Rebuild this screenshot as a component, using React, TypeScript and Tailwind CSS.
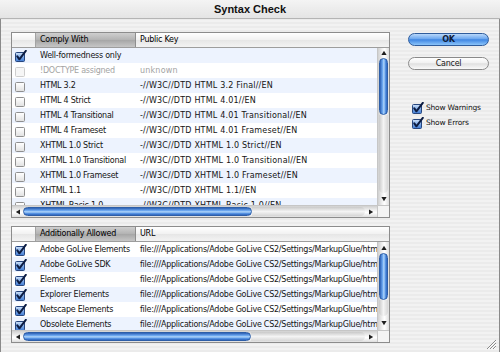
import React from "react";

type Row = { name: string; value: string; checked?: boolean; disabled?: boolean };

const complyRows: Row[] = [
  { name: "Well-formedness only", value: "", checked: true },
  { name: "!DOCTYPE assigned", value: "unknown", disabled: true },
  { name: "HTML 3.2", value: "-//W3C//DTD HTML 3.2 Final//EN" },
  { name: "HTML 4 Strict", value: "-//W3C//DTD HTML 4.01//EN" },
  { name: "HTML 4 Transitional", value: "-//W3C//DTD HTML 4.01 Transitional//EN" },
  { name: "HTML 4 Frameset", value: "-//W3C//DTD HTML 4.01 Frameset//EN" },
  { name: "XHTML 1.0 Strict", value: "-//W3C//DTD XHTML 1.0 Strict//EN" },
  { name: "XHTML 1.0 Transitional", value: "-//W3C//DTD XHTML 1.0 Transitional//EN" },
  { name: "XHTML 1.0 Frameset", value: "-//W3C//DTD XHTML 1.0 Frameset//EN" },
  { name: "XHTML 1.1", value: "-//W3C//DTD XHTML 1.1//EN" },
  { name: "XHTML Basic 1.0", value: "-//W3C//DTD XHTML Basic 1.0//EN" },
];

const glue = "file:///Applications/Adobe GoLive CS2/Settings/MarkupGlue/html";

const allowedRows: Row[] = [
  { name: "Adobe GoLive Elements", value: glue, checked: true },
  { name: "Adobe GoLive SDK", value: glue, checked: true },
  { name: "Elements", value: glue, checked: true },
  { name: "Explorer Elements", value: glue, checked: true },
  { name: "Netscape Elements", value: glue, checked: true },
  { name: "Obsolete Elements", value: glue, checked: true },
];

function CheckBox({ checked, disabled }: { checked?: boolean; disabled?: boolean }) {
  if (checked) {
    return (
      <svg width="12" height="12" viewBox="0 0 12 12" className="block shrink-0">
        <defs>
          <linearGradient id="cbfill" x1="0" y1="0" x2="0" y2="1">
            <stop offset="0" stopColor="#d2e4fa" />
            <stop offset="0.5" stopColor="#7eabe8" />
            <stop offset="1" stopColor="#3f7ad2" />
          </linearGradient>
        </defs>
        <rect x="0.5" y="2.5" width="9" height="9" rx="1" fill="url(#cbfill)" stroke="#27467e" />
        <path
          d="M2.3 6.4 L4.4 9.3 L10.8 0.9"
          fill="none"
          stroke="#0c1c42"
          strokeWidth="2"
          strokeLinecap="round"
          strokeLinejoin="round"
        />
      </svg>
    );
  }
  return (
    <div
      className={
        disabled
          ? "w-[10px] h-[10px] mt-[2px] rounded-[1.5px] border border-[#cdcdcd] bg-[#f6f6f6]"
          : "w-[10px] h-[10px] mt-[2px] rounded-[1.5px] border border-[#8f8f8f] bg-[linear-gradient(to_bottom,#ffffff,#e2e2e2)]"
      }
    />
  );
}

function Arrow({ dir }: { dir: "up" | "down" | "left" | "right" }) {
  const pts = {
    up: "3,0.8 5.6,5 0.4,5",
    down: "0.4,1 5.6,1 3,5.2",
    left: "5,0.4 5,5.6 0.8,3",
    right: "1,0.4 1,5.6 5.2,3",
  }[dir];
  return (
    <svg width="6" height="6" viewBox="0 0 6 6" className="block">
      <polygon points={pts} fill="#1e1e1e" />
    </svg>
  );
}

function VScroll({ upClass, thumbClass, downClass }: { upClass: string; thumbClass: string; downClass: string }) {
  return (
    <div className="w-[12px] flex flex-col border-l border-[#c6c6c6] bg-[linear-gradient(to_right,#d0d0d0,#f6f6f6_45%,#ffffff_60%,#dedede)]">
      <div className={`${upClass} flex items-center justify-center`}>
        <Arrow dir="up" />
      </div>
      <div
        className={`${thumbClass} mx-[1px] rounded-full border border-[#2d5ea8] bg-[linear-gradient(to_right,#2c5fb3,#6aa5ee_35%,#b0d6fb_55%,#4f8de0_80%,#2f64ba)]`}
      />
      <div className="flex-1 mx-[1px] rounded-b-full bg-[linear-gradient(to_right,#c9c9c9,#f4f4f4_50%,#d6d6d6)]" />
      <div className={`${downClass} flex items-center justify-center`}>
        <Arrow dir="down" />
      </div>
    </div>
  );
}

function HScroll({ thumbClass }: { thumbClass: string }) {
  return (
    <div className="h-[12px] flex border-t border-[#c6c6c6]">
      <div className="flex-1 flex bg-[linear-gradient(to_bottom,#d0d0d0,#f6f6f6_45%,#ffffff_60%,#dedede)]">
        <div className="w-[11px] flex items-center justify-center">
          <Arrow dir="left" />
        </div>
        <div
          className={`${thumbClass} my-[1px] rounded-full border border-[#2d5ea8] bg-[linear-gradient(to_bottom,#2c5fb3,#6aa5ee_35%,#b0d6fb_55%,#4f8de0_80%,#2f64ba)]`}
        />
        <div className="flex-1 my-[1px] rounded-r-full bg-[linear-gradient(to_bottom,#c9c9c9,#f4f4f4_50%,#d6d6d6)]" />
        <div className="w-[12px] flex items-center justify-center">
          <Arrow dir="right" />
        </div>
      </div>
      <div className="w-[12px] border-l border-[#c6c6c6] bg-[#f4f4f4]" />
    </div>
  );
}

function ListPane({
  heightClass,
  nameHeader,
  valueHeader,
  rows,
  firstBlue,
  scroll,
  thumbH,
  valueClass,
}: {
  heightClass: string;
  nameHeader: string;
  valueHeader: string;
  rows: Row[];
  firstBlue: boolean;
  scroll: React.ReactNode;
  thumbH: string;
  valueClass: string;
}) {
  return (
    <div className={`${heightClass} flex flex-col border border-[#8c8c8c] bg-white`}>
      <div className="h-[15px] flex border-b border-[#9d9d9d] bg-[linear-gradient(to_bottom,#ffffff,#f1f1f1_50%,#e6e6e6_51%,#f3f3f3)]">
        <div className="w-[24px] border-r border-[#a3a3a3]" />
        <div className="w-[100px] flex items-center pl-[4px] border-r border-[#8e8e8e] bg-[linear-gradient(to_bottom,#cfcfcf,#b2b2b2_50%,#a6a6a6_51%,#c6c6c6)]">
          {nameHeader}
        </div>
        <div className="flex-1 flex items-center pl-[4px]">{valueHeader}</div>
      </div>
      <div className="flex-1 flex min-h-0">
        <div className="flex-1 overflow-hidden">
          {rows.map((r, i) => (
            <div
              key={r.name}
              className={`h-[15px] flex items-center whitespace-nowrap ${
                (i % 2 === 0) === firstBlue ? "bg-[#edf3fe]" : "bg-white"
              } ${r.disabled ? "text-[#a3a3a3]" : "text-[#141414]"}`}
            >
              <div className="w-[24px] shrink-0 flex items-center pl-[3px] h-full">
                <CheckBox checked={r.checked} disabled={r.disabled} />
              </div>
              <div className="w-[100px] shrink-0 pl-[4px]">{r.name}</div>
              <div className={`pl-[4px] ${valueClass}`}>{r.value}</div>
            </div>
          ))}
        </div>
        {scroll}
      </div>
      <HScroll thumbClass={thumbH} />
    </div>
  );
}

function AquaButton({ label, primary }: { label: string; primary?: boolean }) {
  return (
    <div
      className={
        primary
          ? "h-[13px] rounded-full border border-[#2f5c9c] flex items-center justify-center font-bold text-[#10203a] bg-[linear-gradient(to_bottom,#b9d8fb,#6aa6ee_45%,#3f86e3_52%,#8cc5fa_100%)]"
          : "h-[13px] rounded-full border border-[#8a8a8a] flex items-center justify-center text-[#1a1a1a] bg-[linear-gradient(to_bottom,#ffffff,#f1f1f1_45%,#e0e0e0_52%,#fafafa_100%)]"
      }
    >
      {label}
    </div>
  );
}

export default function App() {
  return (
    <div className="relative w-[500px] h-[352px] overflow-hidden flex flex-col font-['DejaVu_Sans',sans-serif] text-[8px] tracking-[-0.25px] bg-[repeating-linear-gradient(0deg,#ebebeb_0px,#ebebeb_2px,#f2f2f2_2px,#f2f2f2_4px)] shadow-[inset_1px_0_0_#8a8a8a,inset_-1px_0_0_#8a8a8a]">
      <div className="h-[19px] shrink-0 flex items-center justify-center pt-[1px] border-b border-[#b4b4b4] bg-[linear-gradient(to_bottom,#f4f4f4,#e4e4e4)] font-['Liberation_Sans',sans-serif] font-bold text-[11px] tracking-normal text-[#111]">
        Syntax Check
      </div>
      <div className="flex pt-[13px] pl-[11px]">
        <div className="w-[379px] flex flex-col gap-[8px]">
          <ListPane
            heightClass="h-[186px]"
            nameHeader="Comply With"
            valueHeader="Public Key"
            rows={complyRows}
            firstBlue={true}
            thumbH="w-[229px]"
            valueClass="tracking-[0.2px]"
            scroll={<VScroll upClass="h-[10px]" thumbClass="h-[57px]" downClass="h-[12px]" />}
          />
          <ListPane
            heightClass="h-[117px]"
            nameHeader="Additionally Allowed"
            valueHeader="URL"
            rows={allowedRows}
            firstBlue={false}
            thumbH="w-[228px]"
            valueClass=""
            scroll={<VScroll upClass="h-[11px]" thumbClass="h-[47px]" downClass="h-[14px]" />}
          />
        </div>
        <div className="ml-[18px] w-[81px] flex flex-col pt-[1px]">
          <AquaButton label="OK" primary />
          <div className="mt-[11px]">
            <AquaButton label="Cancel" />
          </div>
          <div className="mt-[30px] pl-[4px] flex flex-col text-[7.5px] tracking-[-0.2px] text-[#141414]">
            <div className="h-[15px] flex items-center gap-[2px]">
              <CheckBox checked />
              <span>Show Warnings</span>
            </div>
            <div className="h-[15px] flex items-center gap-[2px]">
              <CheckBox checked />
              <span>Show Errors</span>
            </div>
          </div>
        </div>
      </div>
      <svg width="12" height="12" viewBox="0 0 12 12" className="absolute right-[3px] bottom-[2px]">
        <path d="M11 2 L2 11 M11 5 L5 11 M11 8 L8 11" stroke="#8a8a8a" strokeWidth="1" />
        <path d="M11 3 L3 11 M11 6 L6 11 M11 9 L9 11" stroke="#ffffff" strokeWidth="0.8" />
      </svg>
    </div>
  );
}
